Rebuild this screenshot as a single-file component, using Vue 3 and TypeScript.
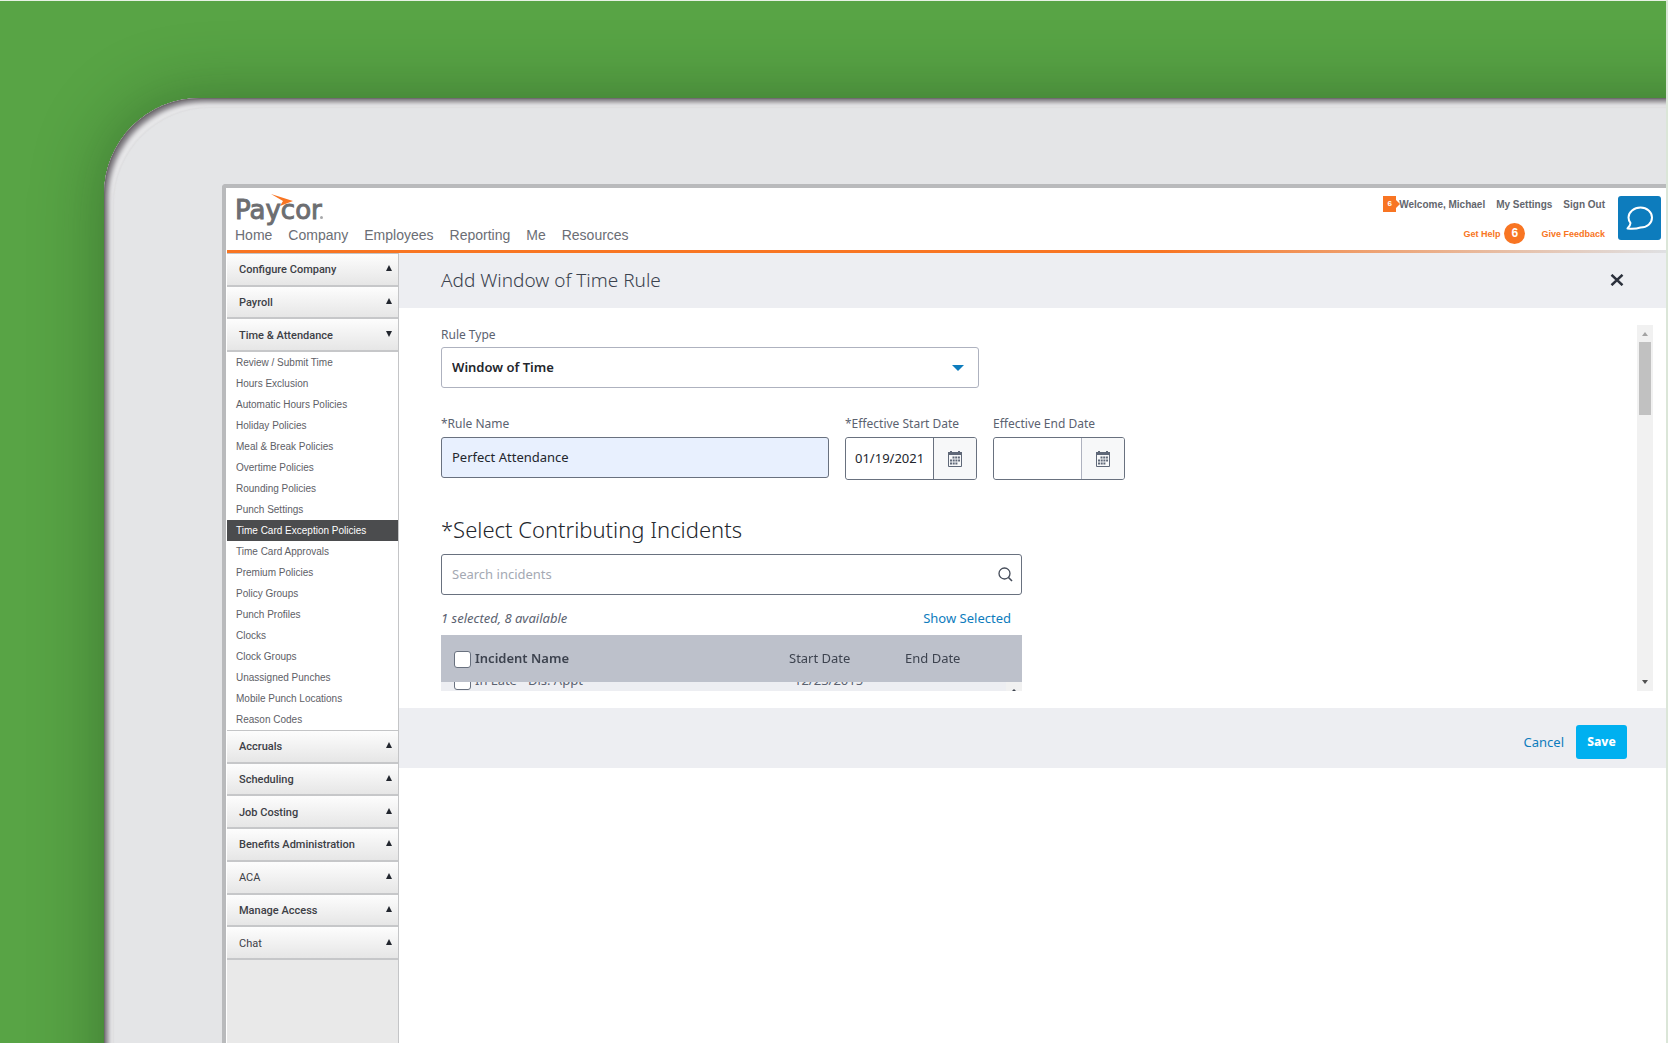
<script setup lang="ts">
import { nextTick, onMounted, ref } from 'vue'

interface Section {
  name: string
  light?: boolean
  open?: boolean
}

const navLinks: string[] = ['Home', 'Company', 'Employees', 'Reporting', 'Me', 'Resources']

const topSections: Section[] = [
  { name: 'Configure Company' },
  { name: 'Payroll' },
  { name: 'Time & Attendance', open: true },
]

const bottomSections: Section[] = [
  { name: 'Accruals' },
  { name: 'Scheduling' },
  { name: 'Job Costing' },
  { name: 'Benefits Administration' },
  { name: 'ACA', light: true },
  { name: 'Manage Access' },
  { name: 'Chat', light: true },
]

const policies: string[] = [
  'Review / Submit Time',
  'Hours Exclusion',
  'Automatic Hours Policies',
  'Holiday Policies',
  'Meal & Break Policies',
  'Overtime Policies',
  'Rounding Policies',
  'Punch Settings',
  'Time Card Exception Policies',
  'Time Card Approvals',
  'Premium Policies',
  'Policy Groups',
  'Punch Profiles',
  'Clocks',
  'Clock Groups',
  'Unassigned Punches',
  'Mobile Punch Locations',
  'Reason Codes',
]

const activePolicy = ref('Time Card Exception Policies')
const ruleType = ref('Window of Time')
const ruleName = ref('Perfect Attendance')
const startDate = ref('01/19/2021')
const endDate = ref('')
const search = ref('')
const list = ref<HTMLElement | null>(null)

// The incident list opens part-way through its first row.
onMounted(async () => {
  await nextTick()
  if (list.value) list.value.scrollTop = 22
})
</script>

<template>
  <div class="page">
    <div class="tablet">
      <div class="screen">
        <header class="header">
          <div class="brand">
            <a href="#" class="logo">
              <span class="wordmark">Paycor</span>
              <svg class="bird" width="22" height="12" viewBox="0 0 22 12">
                <path d="M0 0 L22 7 L9 12 L12 7 Z" fill="#f87523" />
              </svg>
              <i class="mark"></i>
            </a>
            <nav class="nav">
              <a v-for="link in navLinks" :key="link" href="#">{{ link }}</a>
            </nav>
          </div>
          <div class="utilities">
            <div class="account">
              <span class="flag">6</span>
              <a href="#" class="welcome">Welcome, Michael</a>
              <a href="#">My Settings</a>
              <a href="#">Sign Out</a>
            </div>
            <div class="help">
              <a href="#">Get Help</a>
              <span class="count">6</span>
              <a href="#" class="feedback">Give Feedback</a>
            </div>
          </div>
          <button type="button" class="chat" aria-label="Chat">
            <svg width="28" height="24" viewBox="0 0 28 24" fill="none" stroke="#fff" stroke-width="2" stroke-linejoin="round">
              <path d="M14.500 1.500 C21 1.500 26 6 26 11.500 C26 17.500 21 21.500 14.500 21.500 C11.500 22.500 6 23 1.500 22.500 C3.500 20.500 4.500 19 4.500 17 C3 15 2.500 13.500 2.500 11.500 C2.500 6 8 1.500 14.500 1.500 Z" />
            </svg>
          </button>
        </header>
        <div class="rule"></div>
        <div class="body">
          <aside class="sidebar">
            <div class="group three">
              <button v-for="s in topSections" :key="s.name" type="button" class="section">
                <span>{{ s.name }}</span>
                <i :class="['arrow', { down: s.open }]"></i>
              </button>
            </div>
            <ul class="policies">
              <li v-for="p in policies" :key="p">
                <a href="#" :class="{ active: p === activePolicy }" @click.prevent="activePolicy = p">{{ p }}</a>
              </li>
            </ul>
            <div class="group seven">
              <button v-for="s in bottomSections" :key="s.name" type="button" class="section">
                <span :class="{ light: s.light }">{{ s.name }}</span>
                <i class="arrow"></i>
              </button>
            </div>
          </aside>
          <main class="main">
            <div class="title">
              <h1>Add Window of Time Rule</h1>
              <button type="button" class="close" aria-label="Close">
                <svg width="14" height="12" viewBox="0 0 14 12" stroke="#2b303c" stroke-width="2.500" fill="none">
                  <path d="M1.500 0.800 L12.500 11.200 M12.500 0.800 L1.500 11.200" />
                </svg>
              </button>
            </div>
            <div class="panel">
              <form class="form" @submit.prevent>
                <label for="rule-type">Rule Type</label>
                <div class="select">
                  <select id="rule-type" v-model="ruleType">
                    <option>Window of Time</option>
                  </select>
                  <i class="caret"></i>
                </div>
                <div class="fields">
                  <div class="field name">
                    <label for="rule-name">*Rule Name</label>
                    <input id="rule-name" v-model="ruleName" type="text" />
                  </div>
                  <div class="field">
                    <label for="start">*Effective Start Date</label>
                    <div class="date">
                      <input id="start" v-model="startDate" type="text" />
                      <button type="button" aria-label="Pick start date">
                        <svg width="14" height="16" viewBox="0 0 14 16">
                          <path d="M0 1H2V0H4V1H10V0H12V1H14V4H0Z" fill="#5f6878" />
                          <path d="M.5 3V15.500H13.500V3" fill="none" stroke="#5f6878" />
                          <path d="M4.500 6.500H12M2 9.500H12M2 12.500H9.500" stroke="#5f6878" stroke-width="2" stroke-dasharray="2 .7" />
                        </svg>
                      </button>
                    </div>
                  </div>
                  <div class="field">
                    <label for="end">Effective End Date</label>
                    <div class="date empty">
                      <input id="end" v-model="endDate" type="text" />
                      <button type="button" aria-label="Pick end date">
                        <svg width="14" height="16" viewBox="0 0 14 16">
                          <path d="M0 1H2V0H4V1H10V0H12V1H14V4H0Z" fill="#5f6878" />
                          <path d="M.5 3V15.500H13.500V3" fill="none" stroke="#5f6878" />
                          <path d="M4.500 6.500H12M2 9.500H12M2 12.500H9.500" stroke="#5f6878" stroke-width="2" stroke-dasharray="2 .7" />
                        </svg>
                      </button>
                    </div>
                  </div>
                </div>
                <h2>*Select Contributing Incidents</h2>
                <div class="incidents">
                  <div class="search">
                    <input v-model="search" type="text" placeholder="Search incidents" aria-label="Search incidents" />
                    <svg width="15" height="15" viewBox="0 0 15 15" fill="none" stroke="#454c59">
                      <circle cx="6.500" cy="6.500" r="5.500" stroke-width="1.300" />
                      <path d="M10.500 10.500 L14 14" stroke-width="1.600" />
                    </svg>
                  </div>
                  <div class="summary">
                    <em>1 selected, 8 available</em>
                    <a href="#">Show Selected</a>
                  </div>
                  <div class="listwrap">
                    <div ref="list" class="list">
                      <table>
                        <thead>
                          <tr>
                            <th class="check"><input type="checkbox" aria-label="Select all incidents" /></th>
                            <th class="incident">Incident Name</th>
                            <th class="start">Start Date</th>
                            <th>End Date</th>
                          </tr>
                        </thead>
                        <tbody>
                          <tr>
                            <td class="check"><input id="late" type="checkbox" /></td>
                            <td><label for="late">In Late - Dis. Appt</label></td>
                            <td class="date-cell">12/23/2015</td>
                            <td></td>
                          </tr>
                        </tbody>
                      </table>
                    </div>
                    <div class="gutter"><i></i></div>
                  </div>
                </div>
              </form>
              <div class="scrollbar">
                <i class="up"></i>
                <div class="thumb"></div>
                <i class="dn"></i>
              </div>
            </div>
            <footer class="actions">
              <a href="#">Cancel</a>
              <button type="button">Save</button>
            </footer>
          </main>
        </div>
      </div>
    </div>
  </div>
</template>

<style>
body {
  margin: 0;
}
</style>

<style scoped>
* {
  box-sizing: border-box;
}
a {
  color: inherit;
  text-decoration: none;
}
button {
  padding: 0;
  border: 0;
  font: inherit;
  color: inherit;
  cursor: pointer;
}
.page {
  min-height: 100vh;
  display: flex;
  padding: 97px 0 0 104px;
  border-top: 1px solid #e8f2e4;
  border-right: 2px solid #dbe6d8;
  background: #58a445;
  overflow: hidden;
  font-family: "Noto Sans", sans-serif;
}
.tablet {
  flex: 1;
  min-width: 0;
  display: flex;
  margin: 0 -80px -80px 0;
  padding: 86px 80px 80px 118px;
  border-top-left-radius: 96px;
  background: #e4e5e7;
  box-shadow:
    0 0 70px rgba(20, 50, 20, 0.4),
    inset 1px 1px 1px #6f6a6d,
    inset 4px 4px 5px #78747a,
    inset 9px 9px 2px #e9e9eb,
    inset 10px 10px 1px #dcdcde;
}
.screen {
  flex: 1;
  min-width: 0;
  display: flex;
  flex-direction: column;
  padding-left: 1px;
  border: solid #b9babc;
  border-width: 4px 0 0 4px;
  border-top-left-radius: 4px;
  background: #fff;
}
.header {
  display: flex;
  height: 62px;
  padding: 6px 5px 0 8px;
  font-family: "Liberation Sans", Arial, sans-serif;
}
.brand {
  flex: 1;
}
.logo {
  position: relative;
  display: block;
  width: 90px;
  height: 31px;
  color: #6d6e71;
}
.wordmark {
  display: block;
  font: 26px/33px "DejaVu Sans", sans-serif;
  -webkit-text-stroke: 1px #6d6e71;
}
.bird {
  position: absolute;
  left: 36px;
  top: 0;
}
.mark {
  position: absolute;
  right: 2px;
  top: 22px;
  width: 3px;
  height: 3px;
  border-radius: 2px;
  background: #a8a9ab;
}
.nav {
  display: flex;
  gap: 16px;
  font-size: 14px;
  line-height: 20px;
  color: #6b6e75;
}
.utilities {
  display: flex;
  flex-direction: column;
  align-items: flex-end;
  margin-right: 13px;
  font-size: 10px;
  font-weight: bold;
  color: #63666d;
}
.account {
  display: flex;
  align-items: center;
  gap: 11px;
  height: 22px;
}
.flag {
  position: relative;
  width: 13px;
  height: 16px;
  background: #f87523;
  color: #fff;
  font-size: 8px;
  line-height: 16px;
  text-align: center;
}
.flag::after {
  content: "";
  position: absolute;
  left: 13px;
  top: 4px;
  border: 4px solid transparent;
  border-left-color: #f87523;
  border-right: 0;
}
.welcome {
  margin-left: -8px;
}
.help {
  display: flex;
  align-items: center;
  height: 36px;
  margin-top: 3px;
  color: #f87523;
  font-size: 9px;
}
.count {
  width: 21px;
  height: 21px;
  margin: 0 16px 0 4px;
  border-radius: 50%;
  background: #f87523;
  color: #fff;
  font-size: 12px;
  line-height: 21px;
  text-align: center;
}
.chat {
  display: flex;
  align-items: center;
  justify-content: center;
  width: 43px;
  height: 44px;
  margin-top: 2px;
  border-radius: 3px;
  background: #0d7cbd;
}
.rule {
  height: 3px;
  background: linear-gradient(90deg, #f87523 65%, #dfe0e3);
}
.body {
  flex: 1;
  display: flex;
}
.sidebar {
  width: 172px;
  border: solid #c4c5c7;
  border-width: 1px 1px 0 0;
  background: #e9e9e9;
  font-family: "Liberation Sans", Arial, sans-serif;
}
.group {
  display: grid;
  grid-auto-rows: 1fr;
}
.three {
  height: 98px;
}
.seven {
  height: 230px;
  border-top: 1px solid #c4c5c7;
}
.section {
  display: flex;
  align-items: center;
  justify-content: space-between;
  width: 100%;
  padding: 2px 6px 0 12px;
  border-bottom: 2px solid #c6c7c9;
  background: linear-gradient(#fdfdfd, #e6e6e6);
  color: #3d4046;
  font: 500 11px/16px Roboto, sans-serif;
}
.section .light {
  font-weight: 400;
}
.arrow {
  margin-bottom: 4px;
  border: 3px solid transparent;
  border-bottom: 6px solid #22262e;
  border-top: 0;
}
.arrow.down {
  border-top: 6px solid #22262e;
  border-bottom: 0;
}
.policies {
  margin: 0;
  padding: 0;
  background: #fff;
  list-style: none;
  color: #5e6066;
  font-size: 10px;
  line-height: 21px;
}
.policies a {
  display: block;
  padding-left: 9px;
}
.policies .active {
  background: #4b4c4e;
  color: #fff;
}
.main {
  flex: 1;
  min-width: 0;
}
.title {
  display: flex;
  align-items: center;
  justify-content: space-between;
  height: 55px;
  padding: 0 42px 2px;
  background: #edeef2;
}
h1 {
  margin: 0;
  font-size: 19px;
  font-weight: 300;
  line-height: 24px;
  color: #3b424e;
}
.close {
  display: flex;
  background: none;
}
.panel {
  display: flex;
  justify-content: space-between;
  padding: 17px 13px 17px 42px;
}
.form {
  width: 684px;
  height: 366px;
  overflow: hidden;
  color: #5b6270;
  font-size: 12px;
  line-height: 20px;
}
label {
  display: block;
}
.select {
  position: relative;
  width: 538px;
  margin-top: 2px;
}
input,
select {
  padding: 0 10px 2px;
  border: 1px solid #69717f;
  border-radius: 3px;
  background: #fff;
  font: 13px/18px "Noto Sans", sans-serif;
  color: #23262d;
}
select {
  width: 100%;
  height: 41px;
  border-color: #aeb2bf;
  appearance: none;
  font-weight: 600;
}
.caret {
  position: absolute;
  right: 15px;
  top: 18px;
  border: 6px solid transparent;
  border-top-color: #0d7cbd;
  border-bottom: 0;
}
.fields {
  display: flex;
  gap: 16px;
  margin-top: 26px;
}
.field label {
  margin-bottom: 3px;
}
.name input {
  width: 388px;
  height: 41px;
  background: #e8f0fe;
}
.date {
  display: flex;
  width: 132px;
  height: 43px;
  border: 1px solid #69717f;
  border-radius: 3px;
  overflow: hidden;
}
.date input {
  flex: 1;
  min-width: 0;
  padding: 0 0 2px 9px;
  border: 0;
}
.date button {
  display: flex;
  align-items: center;
  justify-content: center;
  width: 43px;
  border-left: 1px solid #69717f;
  background: #f7f8f9;
}
.date.empty button {
  border-left-color: #aeb2bf;
}
h2 {
  margin: 34px 0 9px;
  font-size: 22px;
  font-weight: 300;
  line-height: 31px;
  color: #23262d;
}
.incidents {
  width: 581px;
}
.search {
  position: relative;
}
.search input {
  display: block;
  width: 100%;
  height: 41px;
}
.search input::placeholder {
  color: #a4a9b3;
}
.search svg {
  position: absolute;
  right: 9px;
  top: 13px;
}
.summary {
  display: flex;
  align-items: center;
  justify-content: space-between;
  height: 40px;
  padding: 6px 11px 0 0;
  font-size: 13px;
}
.summary a {
  color: #0d7cbd;
}
.listwrap {
  position: relative;
}
.list {
  height: 56px;
  overflow: hidden;
  background: #edeef2;
}
table {
  width: 100%;
  border-collapse: collapse;
  table-layout: fixed;
  text-align: left;
  font-size: 13px;
}
thead {
  position: sticky;
  top: 0;
  z-index: 1;
  background: #bdc1cb;
  color: #3d434f;
}
th {
  height: 47px;
  padding: 0 0 2px;
  font-weight: 400;
}
td {
  height: 40px;
  padding: 0;
}
.check {
  width: 34px;
  padding: 2px 0 0 13px;
}
.check input {
  display: block;
  width: 17px;
  height: 17px;
  margin: 0;
  padding: 0;
  appearance: none;
}
.incident {
  width: 314px;
  font-weight: 600;
}
.start {
  width: 116px;
}
.date-cell {
  padding-left: 5px;
}
.gutter {
  position: absolute;
  right: 0;
  bottom: 0;
  width: 16px;
  height: 9px;
  background: #f1f1f1;
  overflow: hidden;
}
.gutter i {
  position: absolute;
  left: 5px;
  top: 7px;
  border: 3px solid transparent;
  border-bottom-color: #3d434f;
  border-top: 0;
}
.scrollbar {
  display: flex;
  flex-direction: column;
  align-items: center;
  width: 16px;
  padding: 7px 0;
  background: #f1f1f1;
}
.up,
.dn {
  border: 3px solid transparent;
}
.up {
  border-bottom: 4px solid #a3a3a3;
  border-top: 0;
}
.dn {
  margin-top: auto;
  border-top: 4px solid #505050;
  border-bottom: 0;
}
.thumb {
  width: 12px;
  height: 73px;
  margin-top: 6px;
  background: #c1c1c1;
}
.actions {
  display: flex;
  align-items: center;
  justify-content: flex-end;
  gap: 12px;
  height: 60px;
  padding: 8px 39px 0 0;
  background: #edeef2;
  color: #0d7cbd;
  font-size: 13px;
}
.actions button {
  width: 51px;
  height: 34px;
  padding-bottom: 2px;
  border-radius: 3px;
  background: #00b0f0;
  color: #fff;
  font-size: 12px;
  font-weight: 800;
}
</style>
